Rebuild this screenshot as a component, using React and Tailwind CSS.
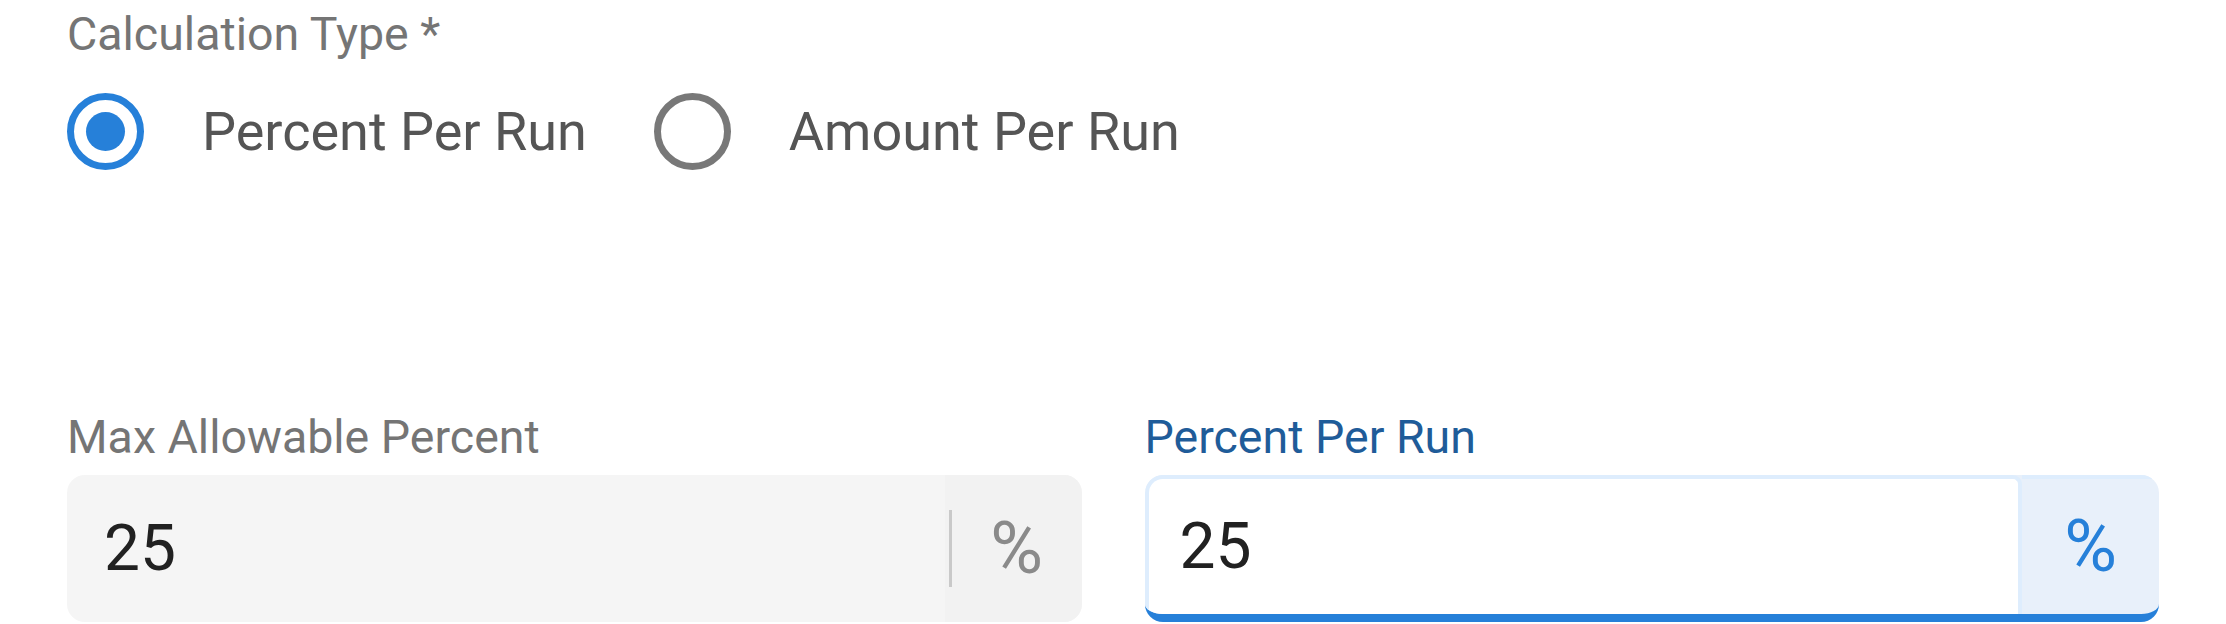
import { useState } from "react";

function Radio({ checked, label, onClick }) {
  return (
    <button type="button" onClick={onClick} className="flex items-center gap-[58px] mr-[67px]">
      <span
        className={`w-[77px] h-[77px] rounded-full border-[7px] flex items-center justify-center ${
          checked ? "border-[#2680d9]" : "border-[#787878]"
        }`}
      >
        {checked && <span className="w-[39px] h-[39px] rounded-full bg-[#2680d9]" />}
      </span>
      <span className="text-[54px] leading-[66px] text-[#555555]">{label}</span>
    </button>
  );
}

function App() {
  const [type, setType] = useState("percent");
  const [percent, setPercent] = useState("25");

  return (
    <div className="w-[2226px] h-[624px] bg-white px-[67px] pt-[7px] font-['Roboto',sans-serif] overflow-hidden">
      <div className="text-[46.5px] leading-[54px] text-[#757575]">Calculation Type *</div>

      <div className="flex items-center mt-[32px] h-[77px]">
        <Radio checked={type === "percent"} label="Percent Per Run" onClick={() => setType("percent")} />
        <Radio checked={type === "amount"} label="Amount Per Run" onClick={() => setType("amount")} />
      </div>

      <div className="grid grid-cols-2 gap-x-[63px] mt-[240px]">
        <div className="flex flex-col">
          <label className="text-[46.5px] leading-[54px] text-[#757575]">Max Allowable Percent</label>
          <div className="mt-[11px] h-[147px] flex rounded-[18px] bg-[#f5f5f5] overflow-hidden">
            <div className="flex-1 flex items-center pl-[37px] text-[64px] text-[#212121]">25</div>
            <div className="w-[137px] bg-[#f2f2f2] flex items-center">
              <span className="ml-[4px] w-[3px] h-[77px] bg-[#c9c9c9]" />
              <span className="flex-1 text-center text-[72px] leading-none text-[#8a8a8a]">%</span>
            </div>
          </div>
        </div>

        <div className="flex flex-col">
          <label className="text-[46.5px] leading-[54px] text-[#1f5c99]">Percent Per Run</label>
          <div className="mt-[11px] h-[147px] flex rounded-[18px] bg-[#e8f0fa] overflow-hidden border-b-[8px] border-[#2680d9]">
            <div className="flex-1 flex items-center bg-white border-[4px] border-b-0 border-[#deedfd] rounded-tl-[18px] rounded-tr-[9px]">
              <input
                value={percent}
                onChange={(e) => setPercent(e.target.value)}
                className="w-full bg-transparent outline-none pl-[31px] text-[64px] text-[#212121]"
              />
            </div>
            <div className="w-[137px] border-t-[4px] border-[#deedfd] flex items-center justify-center">
              <span className="text-[72px] leading-none text-[#2680d9]">%</span>
            </div>
          </div>
        </div>
      </div>
    </div>
  );
}

export default App;
